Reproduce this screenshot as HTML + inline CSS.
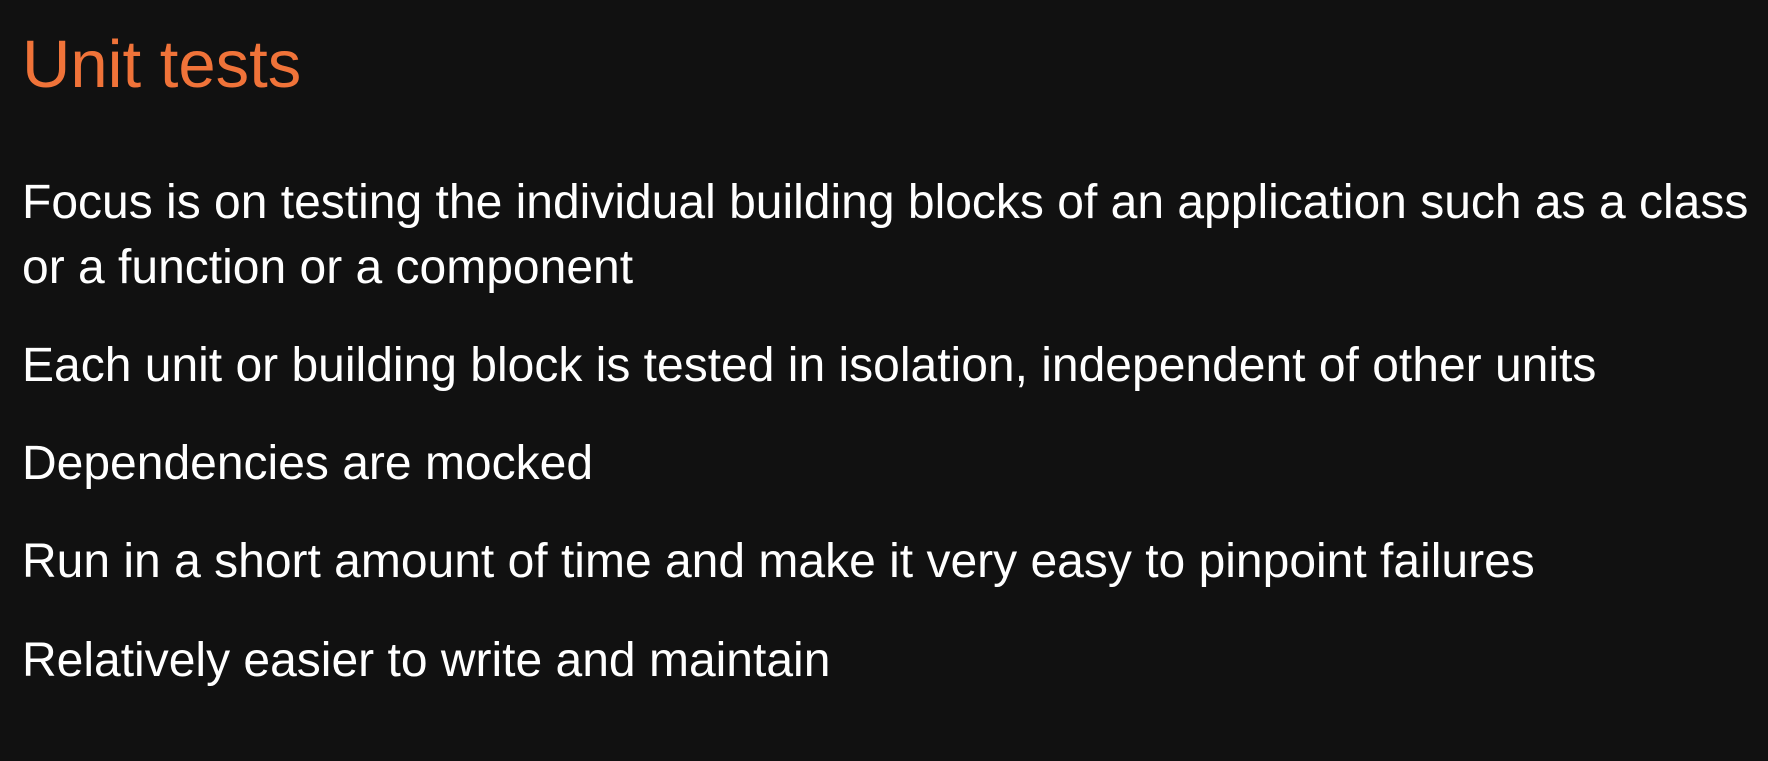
<!DOCTYPE html>
<html><head><meta charset="utf-8"><style>
html,body{margin:0;padding:0;background:#111111;width:1768px;height:761px;overflow:hidden}
div{position:absolute;left:22px;font-family:"Liberation Sans",Arial,sans-serif;white-space:nowrap;color:#ffffff;font-size:48px;line-height:48px}
.t{color:#f07339;font-size:67px;line-height:67px;top:31px}
</style></head><body>
<div class="t">Unit tests</div>
<div style="top:179px">Focus is on testing the individual building blocks of an application such as a class</div>
<div style="top:244px">or a function or a component</div>
<div style="top:342px">Each unit or building block is tested in isolation, independent of other units</div>
<div style="top:440px">Dependencies are mocked</div>
<div style="top:538px">Run in a short amount of time and make it very easy to pinpoint failures</div>
<div style="top:637px">Relatively easier to write and maintain</div>
</body></html>
